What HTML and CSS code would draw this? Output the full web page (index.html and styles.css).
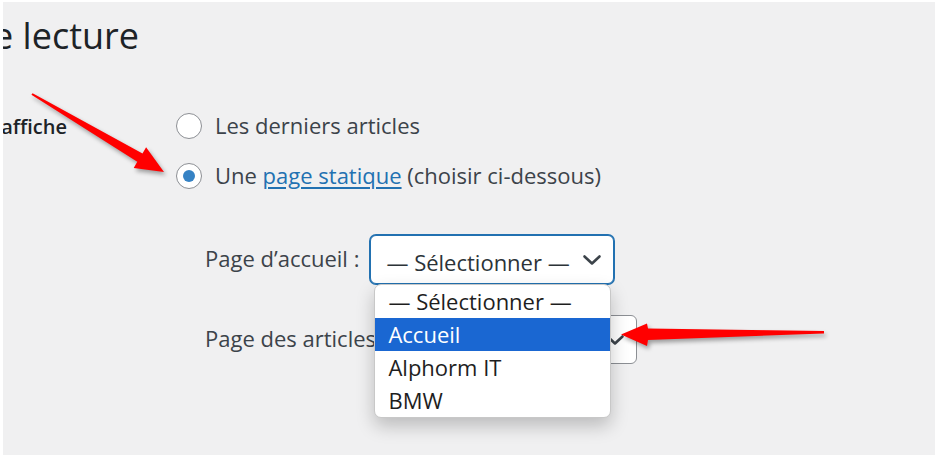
FILE: index.html
```html
<!DOCTYPE html>
<html lang="fr">
<head>
<meta charset="utf-8">
<title>Réglages de lecture</title>
<link rel="stylesheet" href="styles.css">
</head>
<body>
<div class="screen">
  <div class="page">
    <div class="title-clip"><h1 class="title">Réglages de lecture</h1></div>
    <div class="form-row">
      <div class="th"><span class="th-label">La page d’accueil affiche</span></div>
      <div class="td">
        <label class="radio"><span class="radio-input"></span><span>Les derniers articles</span></label>
        <label class="radio"><span class="radio-input checked"></span><span>Une <a class="link" href="#">page statique</a> (choisir ci-dessous)</span></label>
        <div class="sub">
          <div class="sub-row sub-row-front">
            <span class="sub-label">Page d’accueil :</span>
            <div class="select focused">
              <span>— Sélectionner —</span>
              <svg class="chev" width="20" height="12" viewBox="0 0 20 12"><path d="M2.5 2.5 L10 9.5 L17.5 2.5" fill="none" stroke="#3c434a" stroke-width="2.6" stroke-linecap="round" stroke-linejoin="round"/></svg>
              <ul class="listbox">
                <li>— Sélectionner —</li>
                <li class="active">Accueil</li>
                <li>Alphorm IT</li>
                <li>BMW</li>
              </ul>
            </div>
          </div>
          <div class="sub-row sub-row-posts">
            <span class="sub-label">Page des articles :</span>
            <div class="select">
              <span>— Sélectionner —</span>
              <svg class="chev" width="20" height="12" viewBox="0 0 20 12"><path d="M2.5 2.5 L10 9.5 L17.5 2.5" fill="none" stroke="#3c434a" stroke-width="2.6" stroke-linecap="round" stroke-linejoin="round"/></svg>
            </div>
          </div>
        </div>
      </div>
    </div>
  </div>
  <svg class="arrows" width="936" height="459" viewBox="0 0 936 459">
    <g class="arrow">
      <polygon points="32.6,93.2 142.5,153.5 146.1,147.3 164,172 133.7,167.9 137.3,161.7 31.4,94.8"/>
      <polygon points="824,331 648,328.5 647,323.5 621,334.5 647,346 648,340 824,333.5"/>
    </g>
  </svg>
</div>
</body>
</html>
```

FILE: styles.css
```css
* { box-sizing: border-box; }
html, body { margin: 0; padding: 0; }
body {
  background: #ffffff;
  font-family: "Open Sans", "Noto Sans", sans-serif;
  color: #3c434a;
  width: 936px;
  height: 459px;
  overflow: hidden;
}
.screen {
  position: relative;
  width: 936px;
  height: 459px;
  padding: 2px 1px 4px 3px;
}
.page {
  background: #f0f0f1;
  width: 100%;
  height: 100%;
  overflow: hidden;
  padding-top: 9px;
}
.title-clip {
  width: 136px;
  display: flex;
  justify-content: flex-end;
}
.title {
  margin: 0;
  font-size: 36px;
  font-weight: 400;
  line-height: 50px;
  color: #1d2327;
  white-space: nowrap;
}
.form-row {
  display: flex;
  margin-top: 40px;
}
.th {
  width: 64px;
  flex: none;
  display: flex;
  justify-content: flex-end;
  height: 50px;
  align-items: center;
}
.th-label {
  font-weight: 600;
  font-size: 20px;
  color: #1d2327;
  white-space: nowrap;
}
.td {
  margin-left: 109px;
  font-size: 22px;
}
.radio {
  display: flex;
  align-items: center;
  height: 50px;
  gap: 13px;
  white-space: nowrap;
}
.radio > span:last-child { position: relative; top: -1px; }
.radio-input {
  width: 26px;
  height: 26px;
  border-radius: 50%;
  border: 1.5px solid #8c8f94;
  background: #fff;
  display: flex;
  align-items: center;
  justify-content: center;
  flex: none;
}
.radio-input.checked::after {
  content: "";
  width: 12px;
  height: 12px;
  border-radius: 50%;
  background: #3582c4;
}
.link {
  color: #2271b1;
  text-decoration: underline;
  text-underline-offset: 3px;
}
.sub {
  padding-left: 29px;
  margin-top: 34px;
  display: flex;
  flex-direction: column;
  gap: 31px;
}
.sub-row {
  display: flex;
  align-items: center;
  white-space: nowrap;
}
.sub-row-front { gap: 11px; }
.sub-row-posts { gap: 5px; }
.sub-label { position: relative; top: -2px; }
.select {
  position: relative;
  width: 244px;
  height: 49px;
  border: 1px solid #8c8f94;
  border-radius: 6px;
  background: #fff;
  display: flex;
  align-items: center;
  justify-content: space-between;
  padding: 5px 11px 0 15px;
  color: #2c3338;
}
.select.focused {
  border-color: #2271b1;
  box-shadow: 0 0 0 1px #2271b1;
}
.chev { flex: none; margin-top: -4px; }
.listbox {
  position: absolute;
  left: 3px;
  top: calc(100% + 1px);
  width: 237px;
  margin: 0;
  padding: 0;
  list-style: none;
  background: #fff;
  border: 1px solid #c8c8c8;
  border-radius: 7px;
  overflow: hidden;
  box-shadow: 0 8px 18px rgba(0, 0, 0, 0.22);
  z-index: 2;
}
.listbox li {
  height: 33px;
  line-height: 33px;
  padding-left: 13px;
  color: #1e1e1e;
}
.listbox li.active {
  background: #1a67d2;
  color: #fff;
}
.arrows {
  position: absolute;
  left: 0;
  top: 0;
  pointer-events: none;
  z-index: 5;
}
.arrow {
  fill: #ff0000;
  filter: drop-shadow(2px 3px 2px rgba(0, 0, 0, 0.35));
}
```
